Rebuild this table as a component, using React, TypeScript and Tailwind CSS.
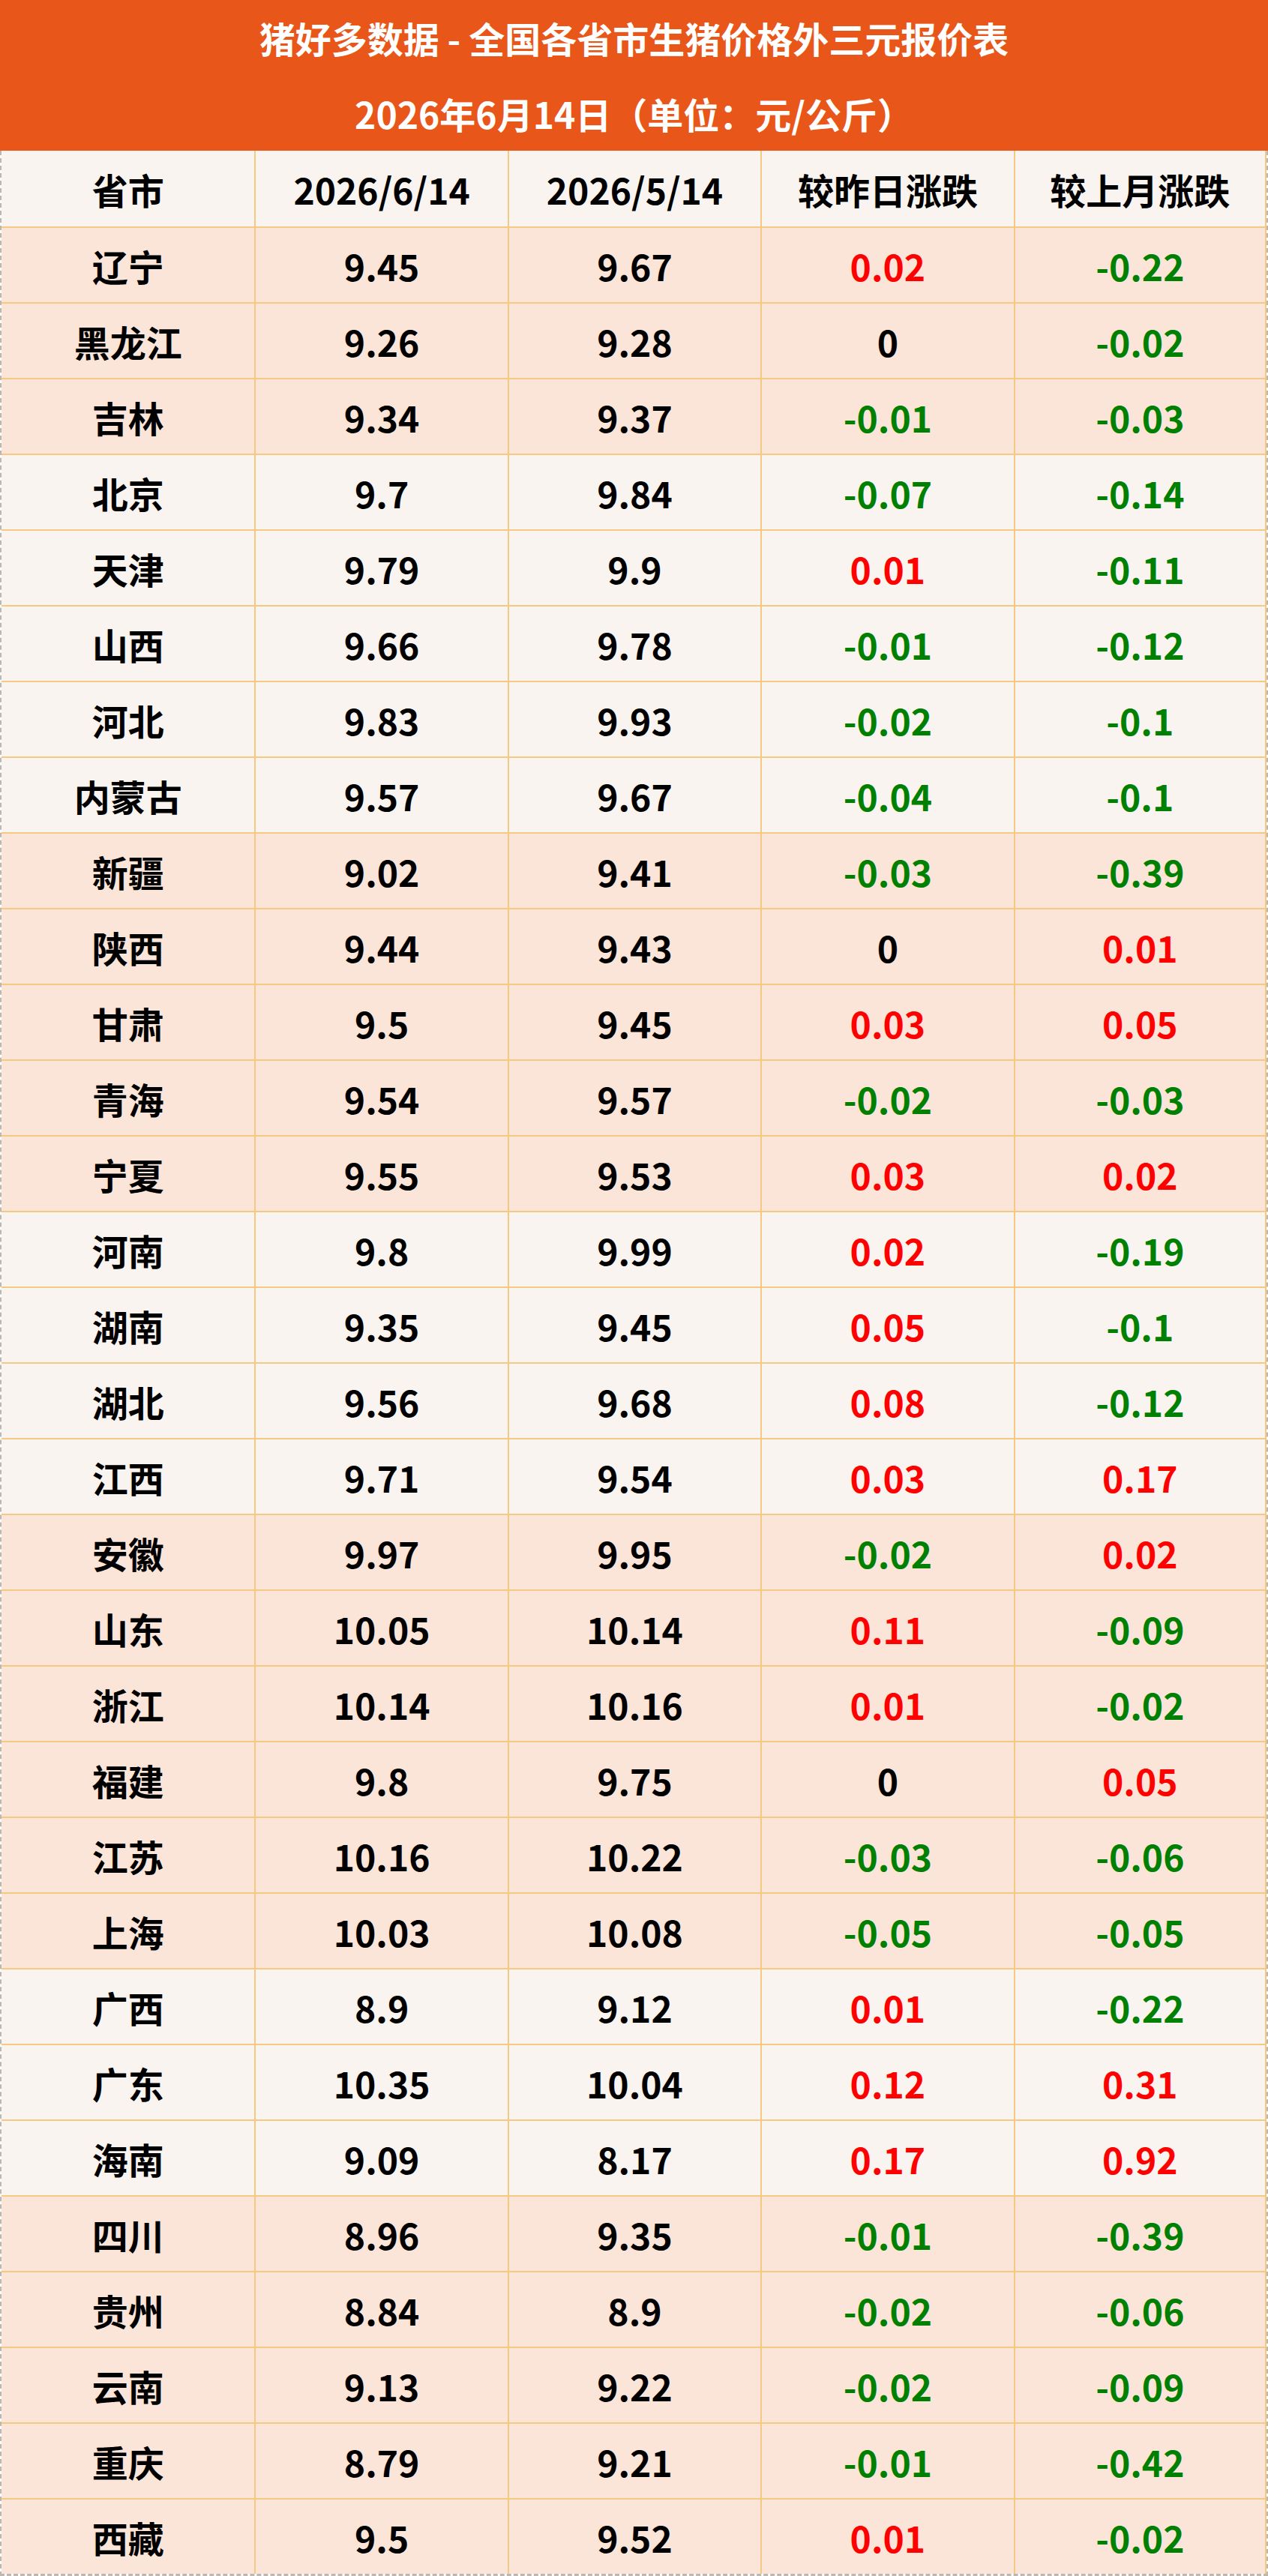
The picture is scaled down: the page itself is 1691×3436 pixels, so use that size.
import React from 'react';

type Row = {
  name: string;
  today: string;
  lastMonth: string;
  dayDiff: string;
  monthDiff: string;
  shade: boolean;
};

// [省市, 2026/6/14, 2026/5/14, 较昨日涨跌, 较上月涨跌]
const groups: string[][][] = [
  [
    ['辽宁', '9.45', '9.67', '0.02', '-0.22'],
    ['黑龙江', '9.26', '9.28', '0', '-0.02'],
    ['吉林', '9.34', '9.37', '-0.01', '-0.03'],
  ],
  [
    ['北京', '9.7', '9.84', '-0.07', '-0.14'],
    ['天津', '9.79', '9.9', '0.01', '-0.11'],
    ['山西', '9.66', '9.78', '-0.01', '-0.12'],
    ['河北', '9.83', '9.93', '-0.02', '-0.1'],
    ['内蒙古', '9.57', '9.67', '-0.04', '-0.1'],
  ],
  [
    ['新疆', '9.02', '9.41', '-0.03', '-0.39'],
    ['陕西', '9.44', '9.43', '0', '0.01'],
    ['甘肃', '9.5', '9.45', '0.03', '0.05'],
    ['青海', '9.54', '9.57', '-0.02', '-0.03'],
    ['宁夏', '9.55', '9.53', '0.03', '0.02'],
  ],
  [
    ['河南', '9.8', '9.99', '0.02', '-0.19'],
    ['湖南', '9.35', '9.45', '0.05', '-0.1'],
    ['湖北', '9.56', '9.68', '0.08', '-0.12'],
    ['江西', '9.71', '9.54', '0.03', '0.17'],
  ],
  [
    ['安徽', '9.97', '9.95', '-0.02', '0.02'],
    ['山东', '10.05', '10.14', '0.11', '-0.09'],
    ['浙江', '10.14', '10.16', '0.01', '-0.02'],
    ['福建', '9.8', '9.75', '0', '0.05'],
    ['江苏', '10.16', '10.22', '-0.03', '-0.06'],
    ['上海', '10.03', '10.08', '-0.05', '-0.05'],
  ],
  [
    ['广西', '8.9', '9.12', '0.01', '-0.22'],
    ['广东', '10.35', '10.04', '0.12', '0.31'],
    ['海南', '9.09', '8.17', '0.17', '0.92'],
  ],
  [
    ['四川', '8.96', '9.35', '-0.01', '-0.39'],
    ['贵州', '8.84', '8.9', '-0.02', '-0.06'],
    ['云南', '9.13', '9.22', '-0.02', '-0.09'],
    ['重庆', '8.79', '9.21', '-0.01', '-0.42'],
    ['西藏', '9.5', '9.52', '0.01', '-0.02'],
  ],
];

const rows: Row[] = groups.flatMap((g, gi) =>
  g.map(([name, today, lastMonth, dayDiff, monthDiff]) => ({
    name,
    today,
    lastMonth,
    dayDiff,
    monthDiff,
    shade: gi % 2 === 0,
  }))
);

const diffColor = (v: string) => {
  const n = parseFloat(v);
  if (n > 0) return 'text-[#ff0000]';
  if (n < 0) return 'text-[#008000]';
  return 'text-black';
};

const cell = 'flex items-center justify-center border-l-2 border-[#f6c980]';

export default function App() {
  return (
    <div
      className="w-[1691px] bg-white text-[48px] font-bold leading-none"
      style={{ fontFamily: '"Noto Sans CJK SC", "Noto Sans", sans-serif' }}
    >
      {/* Title band */}
      <div className="h-[201px] bg-[#e85619] text-white flex flex-col">
        <div className="h-[100px] flex items-center justify-center">
          猪好多数据 - 全国各省市生猪价格外三元报价表
        </div>
        <div className="h-[101px] flex items-center justify-center">
          2026年6月14日（单位：元/公斤）
        </div>
      </div>

      <div className="border-x-2 border-b-[3px] border-dashed border-[#bdb7b2]">
        {/* Header row */}
        <div className="grid grid-cols-5 h-[101px] bg-[#f9f4f0] text-black">
          <div className="flex items-center justify-center">省市</div>
          <div className={cell}>2026/6/14</div>
          <div className={cell}>2026/5/14</div>
          <div className={cell}>较昨日涨跌</div>
          <div className={`${cell} border-r-2`}>较上月涨跌</div>
        </div>

        {rows.map((r) => (
          <div
            key={r.name}
            className={`grid grid-cols-5 h-[101px] border-t-2 border-[#f6c980] text-black ${
              r.shade ? 'bg-[#fbe4d8]' : 'bg-[#f9f4f0]'
            }`}
          >
            <div className="flex items-center justify-center">{r.name}</div>
            <div className={cell}>{r.today}</div>
            <div className={cell}>{r.lastMonth}</div>
            <div className={`${cell} ${diffColor(r.dayDiff)}`}>{r.dayDiff}</div>
            <div className={`${cell} border-r-2 ${diffColor(r.monthDiff)}`}>{r.monthDiff}</div>
          </div>
        ))}
      </div>
    </div>
  );
}
